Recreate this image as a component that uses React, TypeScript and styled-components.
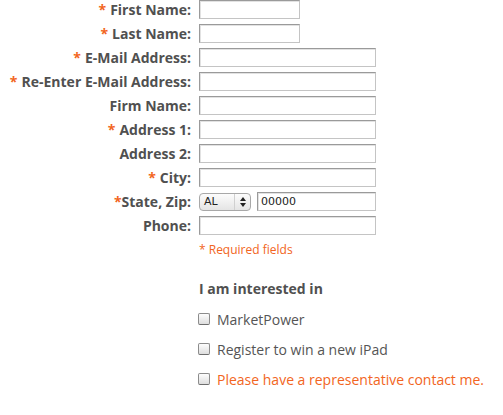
import styled, { createGlobalStyle } from "styled-components";

const Global = createGlobalStyle`
  body {
    margin: 0;
    background: #fff;
    font-family: "Open Sans", "Liberation Sans", sans-serif;
    color: #555;
  }
`;

const Form = styled.form`
  display: grid;
  grid-template-columns: 191px 1fr;
  column-gap: 8px;
  row-gap: 5px;
  grid-auto-rows: 19px;
  width: 503px;
`;

const Label = styled.label`
  justify-self: end;
  align-self: center;
  font-size: 14px;
  font-weight: 700;
  color: #505050;
  white-space: nowrap;
  line-height: 19px;
`;

const Star = styled.span<{ $gap?: boolean }>`
  color: #f26522;
  margin-right: ${(p) => (p.$gap ? "4px" : "0")};
`;

const Field = styled.div`
  display: flex;
  align-items: center;
  gap: 6px;
`;

const Input = styled.input<{ $w: number }>`
  box-sizing: border-box;
  width: ${(p) => p.$w}px;
  height: 19px;
  border: 1px solid #9a9a9a;
  border-right-color: #c4c4c4;
  border-bottom-color: #c4c4c4;
  box-shadow: inset 1px 1px 0 #e2e2e2;
  padding: 0 3px;
  font-family: "DejaVu Sans", "Liberation Sans", sans-serif;
  font-size: 11px;
  color: #222;
  margin: 0;
`;

const Select = styled.div`
  box-sizing: border-box;
  width: 52px;
  height: 18px;
  border: 1px solid #a8a8a8;
  border-radius: 4px;
  background: linear-gradient(#fcfcfc, #e4e4e4);
  display: flex;
  align-items: center;
  justify-content: space-between;
  padding: 0 4px 0 4px;
  font-family: "DejaVu Sans", "Liberation Sans", sans-serif;
  font-size: 11px;
  color: #222;
`;

const Arrows = styled.span`
  display: flex;
  flex-direction: column;
  align-items: center;
  padding-left: 5px;
  border-left: 1px solid #d0d0d0;
  height: 100%;
  justify-content: center;
`;

const Note = styled.div`
  grid-column: 2;
  font-size: 12px;
  color: #f26522;
  line-height: 19px;
`;

const Interest = styled.div`
  margin-left: 199px;
  margin-top: 21px;
  display: flex;
  flex-direction: column;
`;

const Heading = styled.div`
  font-size: 14px;
  font-weight: 700;
  color: #505050;
  line-height: 18px;
  margin-bottom: 6px;
`;

const Check = styled.label<{ $accent?: boolean }>`
  display: flex;
  align-items: center;
  gap: 7px;
  height: 30px;
  font-size: 14px;
  color: ${(p) => (p.$accent ? "#f26522" : "#555")};
`;

const Box = styled.span`
  box-sizing: border-box;
  width: 12px;
  height: 12px;
  border: 1px solid #8c8c8c;
  border-bottom-color: #6e6e6e;
  border-radius: 2px;
  background: linear-gradient(#fdfdfd, #dedede);
  margin-left: -1px;
`;

const fields = [
  { label: "First Name:", req: true, w: 101 },
  { label: "Last Name:", req: true, w: 101 },
  { label: "E-Mail Address:", req: true, w: 177 },
  { label: "Re-Enter E-Mail Address:", req: true, w: 177 },
  { label: "Firm Name:", req: false, w: 177 },
  { label: "Address 1:", req: true, w: 177 },
  { label: "Address 2:", req: false, w: 177 },
  { label: "City:", req: true, w: 177 },
];

function App() {
  return (
    <>
      <Global />
      <Form>
        {fields.map((f) => (
          <>
            <Label key={f.label + "l"}>
              {f.req && <Star $gap>*</Star>}
              {f.label}
            </Label>
            <Field key={f.label + "f"}>
              <Input $w={f.w} />
            </Field>
          </>
        ))}
        <Label>
          <Star>*</Star>State, Zip:
        </Label>
        <Field>
          <Select>
            <span>AL</span>
            <Arrows>
              <svg width="6" height="10" viewBox="0 0 6 10">
                <path d="M3 0 L6 4 L0 4 Z M3 10 L6 6 L0 6 Z" fill="#222" />
              </svg>
            </Arrows>
          </Select>
          <Input $w={119} defaultValue="00000" />
        </Field>
        <Label>Phone:</Label>
        <Field>
          <Input $w={177} />
        </Field>
        <Note>* Required fields</Note>
      </Form>
      <Interest>
        <Heading>I am interested in</Heading>
        <Check>
          <Box />
          MarketPower
        </Check>
        <Check>
          <Box />
          Register to win a new iPad
        </Check>
        <Check $accent>
          <Box />
          Please have a representative contact me.
        </Check>
      </Interest>
    </>
  );
}

export default App;
